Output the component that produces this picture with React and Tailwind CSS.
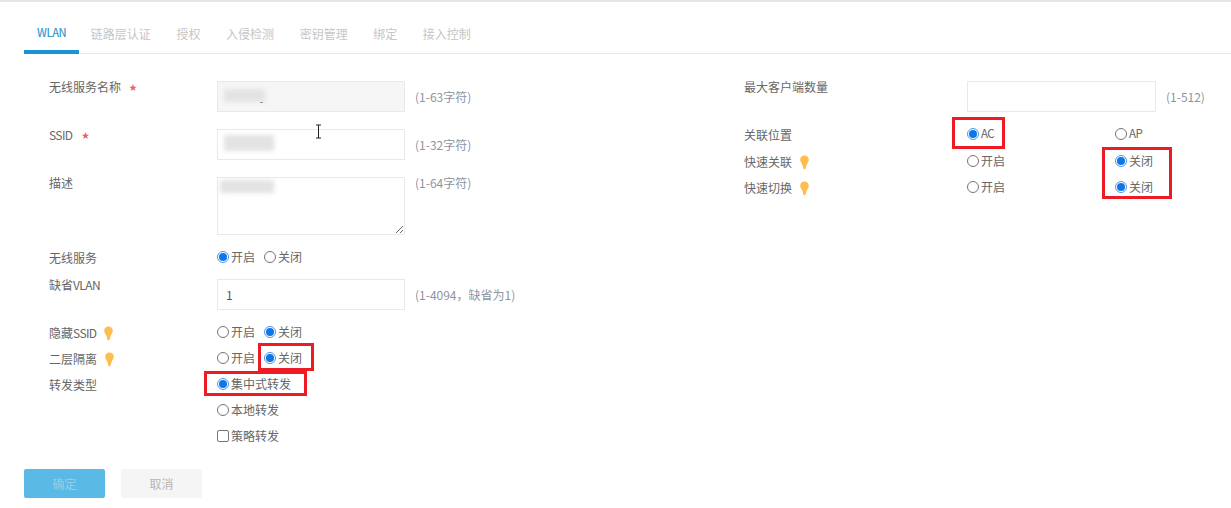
import React from "react";

const font = { fontFamily: '"Noto Sans CJK SC", "Noto Sans", sans-serif' };

function Radio({ on, children, className = "", narrow }) {
  return (
    <span className={`flex items-center gap-[2px] ${className}`}>
      <span className={`w-[12px] h-[12px] rounded-full border flex items-center justify-center bg-white ${on ? "border-[#4a97ea]" : "border-[#757575]"}`}>
        {on && <span className="w-[8px] h-[8px] rounded-full bg-[#0f76e6]" />}
      </span>
      <span className={narrow ? "text-[11.5px] tracking-[-0.5px]" : ""}>{children}</span>
    </span>
  );
}

function Bulb() {
  return (
    <svg width="9" height="15" viewBox="0 0 10 16">
      <path d="M5 0.3C2.2 0.3 0.2 2.4 0.2 5 0.2 7.4 2 8.8 2.8 11 3.3 12.6 3.6 15.7 5 15.7 6.4 15.7 6.7 12.6 7.2 11 8 8.8 9.8 7.4 9.8 5 9.8 2.4 7.8 0.3 5 0.3Z" fill="#fdbd4f" />
    </svg>
  );
}

function Star() {
  return <span className="text-[#e5606a] text-[8px] leading-none">★</span>;
}

function Row({ label, children, h = "h-[26px]", items = "items-center", mb = "" }) {
  return (
    <div className={`flex ${items} ${h} ${mb}`}>
      <div className={`w-[168px] shrink-0 flex items-center ${items === "items-center" ? "pt-[2px]" : ""}`}>{label}</div>
      {children}
    </div>
  );
}

function Blur({ className }) {
  return <span className={`absolute bg-[#e3e3e3] blur-[2px] ${className}`} />;
}

function Field({ value = "", disabled, blur, hint, w = "w-[188px]" }) {
  return (
    <div className="flex items-center h-[31px]">
      <div className={`relative ${w} h-[31px]`}>
        <input
          readOnly
          value={value}
          className={`w-full h-full border border-[#e9e9e9] px-[8px] outline-none text-[#555] text-[12px] ${disabled ? "bg-[#f6f6f6]" : "bg-white"}`}
        />
        {blur}
      </div>
      <span className="ml-[10px] text-[#8d95a0]">{hint}</span>
    </div>
  );
}

const tabs = ["链路层认证", "授权", "入侵检测", "密钥管理", "绑定", "接入控制"];

export default function App() {
  return (
    <div style={font} className="relative w-[1231px] h-[508px] bg-white text-[12px] text-[#666] overflow-hidden">
      <div className="h-[2px] bg-[#e4e6ea]" />

      <div className="ml-[24px] mt-[14px] h-[38px] flex border-b border-[#e6e8eb]">
        <div className="h-[38px] w-[55px] -mr-[1px] pl-[13px] border-b-[4px] border-[#1a94d4] text-[#3a9ccf] text-[11px] font-medium tracking-[-0.4px] flex items-center pb-[2px]">WLAN</div>
        {tabs.map((t) => (
          <div key={t} className="h-[36px] px-[12.8px] text-[#c6c6c6] flex items-center">{t}</div>
        ))}
      </div>

      <div className="flex mt-[27px]">
        <div className="w-[708px] pl-[49px] shrink-0">
          <Row h="h-[31px]" items="items-start" mb="mb-[17px]" label={<span className="flex items-center gap-[8px] h-[12px]">无线服务名称<Star /></span>}>
            <Field
              disabled
              hint="(1-63字符)"
              blur={
                <>
                  <Blur className="left-[7px] top-[8px] w-[41px] h-[13px]" />
                  <span className="absolute left-[43px] top-[21px] w-[3px] h-px bg-[#999]" />
                </>
              }
            />
          </Row>
          <Row h="h-[31px]" items="items-start" mb="mb-[17px]" label={<span className="flex items-center gap-[9px] h-[12px]"><span className="tracking-[-0.6px]">SSID</span><Star /></span>}>
            <Field hint="(1-32字符)" blur={<Blur className="left-[7px] top-[6px] w-[50px] h-[16px]" />} />
          </Row>
          <div className="flex items-start h-[58px] mb-[9px]">
            <div className="w-[168px] shrink-0 leading-[12px]">描述</div>
            <div className="relative w-[188px] h-[58px]">
              <textarea readOnly className="block w-[188px] h-[58px] border border-[#e9e9e9] outline-none bg-white" />
              <Blur className="left-[3px] top-[3px] w-[54px] h-[13px]" />
            </div>
            <span className="ml-[10px] text-[#8d95a0] leading-[12px]">(1-64字符)</span>
          </div>
          <Row label="无线服务" mb="mb-[9px]">
            <Radio on>开启</Radio>
            <Radio className="ml-[9px]">关闭</Radio>
          </Row>
          <Row h="h-[31px]" items="items-start" mb="mb-[9px]" label={<span className="leading-[12px]">缺省<span className="tracking-[-0.6px]">VLAN</span></span>}>
            <Field value="1" hint="(1-4094，缺省为1)" />
          </Row>
          <Row label={<span className="flex items-center gap-[7px]"><span>隐藏<span className="tracking-[-0.6px]">SSID</span></span><Bulb /></span>}>
            <Radio>开启</Radio>
            <Radio on className="ml-[9px]">关闭</Radio>
          </Row>
          <Row label={<span className="flex items-center gap-[8px]">二层隔离<Bulb /></span>}>
            <Radio>开启</Radio>
            <Radio on className="ml-[9px]">关闭</Radio>
          </Row>
          <Row label="转发类型">
            <Radio on>集中式转发</Radio>
          </Row>
          <Row label="">
            <Radio>本地转发</Radio>
          </Row>
          <Row label="">
            <span className="flex items-center gap-[2px]">
              <span className="w-[12px] h-[12px] rounded-[2px] border border-[#757575]" />
              策略转发
            </span>
          </Row>
        </div>

        <div className="flex-1 pl-[36px]">
          <div className="flex items-start h-[31px] mb-[9px]">
            <div className="w-[223px] shrink-0 leading-[12px]">最大客户端数量</div>
            <Field hint="(1-512)" w="w-[189px]" />
          </div>
          <div className="flex items-center h-[26px] mb-[1px]">
            <div className="w-[223px] shrink-0 pt-[2px]">关联位置</div>
            <Radio on narrow className="w-[148px]">AC</Radio>
            <Radio narrow>AP</Radio>
          </div>
          <div className="flex items-center h-[26px]">
            <div className="w-[223px] shrink-0 flex items-center gap-[8px] pt-[2px]">快速关联<Bulb /></div>
            <Radio className="w-[148px]">开启</Radio>
            <Radio on>关闭</Radio>
          </div>
          <div className="flex items-center h-[26px]">
            <div className="w-[223px] shrink-0 flex items-center gap-[8px] pt-[2px]">快速切换<Bulb /></div>
            <Radio className="w-[148px]">开启</Radio>
            <Radio on>关闭</Radio>
          </div>
        </div>
      </div>

      <div className="flex gap-[16px] ml-[24px] mt-[20px]">
        <div className="w-[81px] h-[29px] rounded-[2px] bg-[#5bb9e6] text-[#93cfe9] flex items-center justify-center">确定</div>
        <div className="w-[81px] h-[29px] rounded-[2px] bg-[#f5f5f5] text-[#b4b4b4] flex items-center justify-center">取消</div>
      </div>

      {/* annotation boxes and cursor lying over the page */}
      <div className="absolute left-[258px] top-[343px] w-[56px] h-[28px] border-[3px] border-[#ed1c24]" />
      <div className="absolute left-[204px] top-[371px] w-[103px] h-[25px] border-[3px] border-[#ed1c24]" />
      <div className="absolute left-[952px] top-[117px] w-[53px] h-[32px] border-[3px] border-[#ed1c24]" />
      <div className="absolute left-[1102px] top-[147px] w-[70px] h-[52px] border-[3px] border-[#ed1c24]" />
      <svg className="absolute left-[314px] top-[124px]" width="9" height="15" viewBox="0 0 9 15">
        <path d="M2 1H7M4.5 1V14M2 14H7" stroke="#222" strokeWidth="1" fill="none" />
      </svg>
    </div>
  );
}
